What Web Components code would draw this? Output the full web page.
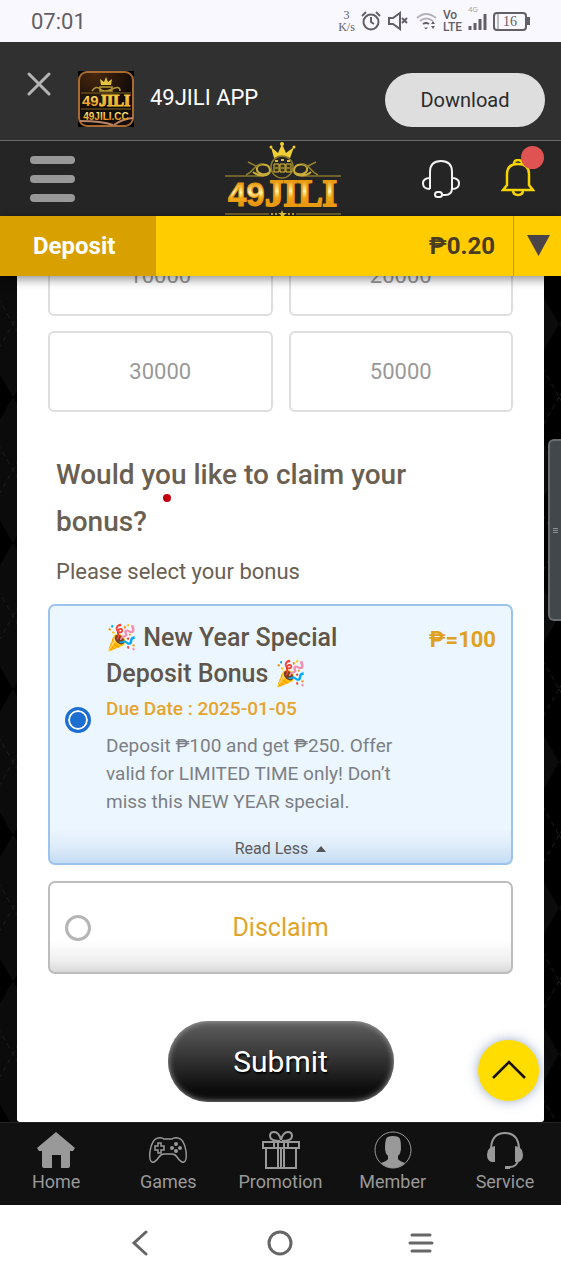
<!DOCTYPE html>
<html lang="en">
<head>
<meta charset="UTF-8">
<meta name="viewport" content="width=device-width, initial-scale=1">
<title>49JILI - Deposit</title>
<style>
  html, body {
    height: 100%;
  }
  body {
    margin: 0;
    background: #fff;
    font-family: Roboto, "Noto Sans", sans-serif;
  }
</style>
</head>
<body>
<c-app></c-app>

<script>
class StatusBar extends HTMLElement {
  constructor() {
    super();
    this.attachShadow({ mode: "open" });
    this.shadowRoot.innerHTML = `
      <style>
        :host {
          display: flex;
          align-items: center;
          justify-content: space-between;
          height: 42px;
          padding: 0 31px;
          box-sizing: border-box;
          background: #faf8ff;
          color: #626066;
        }
        .time {
          font-size: 22px;
          line-height: 26px;
          padding-top: 2px;
        }
        .icons {
          display: flex;
          align-items: center;
          gap: 6px;
        }
        .speed {
          display: flex;
          flex-direction: column;
          font: 12px/12px "Liberation Serif", serif;
          text-align: center;
        }
        .lte {
          display: flex;
          flex-direction: column;
          font-size: 12px;
          line-height: 12px;
          font-weight: 500;
        }
        .signal {
          display: flex;
          flex-direction: column;
          font-size: 8px;
          line-height: 8px;
          color: #aaa;
          padding-bottom: 6px;
        }
        .battery {
          display: flex;
          align-items: center;
        }
        .level {
          width: 34px;
          height: 19px;
          box-sizing: border-box;
          border: 2px solid #626066;
          border-radius: 4px;
          font: 14px/15px "Liberation Serif", serif;
          text-align: center;
          background: linear-gradient(to right, transparent 2px, #bbb 2px, #bbb 4px, transparent 4px);
        }
        .tip {
          width: 3px;
          height: 8px;
          background: #626066;
        }
        svg {
          display: block;
          fill: none;
          stroke: #626066;
          stroke-width: 2;
        }
      </style>
      <span class="time">07:01</span>
      <div class="icons">
        <div class="speed"><span>3</span><span>K/s</span></div>
        <svg width="20" height="20" viewBox="0 0 20 20">
          <circle cx="10" cy="11" r="7.5"/>
          <path d="M10 6v5l3 2M1 5l4-4M19 5l-4-4"/>
        </svg>
        <svg width="22" height="20" viewBox="0 0 22 20">
          <path d="M2 7h4l7-5v16l-7-5H2z"/>
          <path d="M15 7l5 5M20 7l-5 5"/>
        </svg>
        <svg width="22" height="18" viewBox="-1 0 22 18">
          <path d="M1 6q9-8 19 0M4 9q6-5 13 0" stroke="#b4b2b8"/>
          <path d="M7 12q3-2 6 0"/>
          <path d="M8 15.500l2 2 2-2z" fill="#626066" stroke="none"/>
          <path d="M15 12l2-3 2 3zM15 14l2 3 2-3z" fill="#626066" stroke="none"/>
        </svg>
        <div class="lte"><span>Vo</span><span>LTE</span></div>
        <div class="signal">
          <span>4G</span>
          <svg width="19" height="16" viewBox="0 0 19 16" style="stroke-width: 3px">
            <path d="M2 16v-4M7 16V9M12 16V5M17 16V0"/>
          </svg>
        </div>
        <div class="battery"><div class="level">16</div><div class="tip"></div></div>
      </div>
    `;
  }
}
customElements.define("c-status-bar", StatusBar);

class AppBanner extends HTMLElement {
  constructor() {
    super();
    this.attachShadow({ mode: "open" });
    this.shadowRoot.innerHTML = `
      <style>
        :host {
          display: flex;
          align-items: flex-start;
          height: 98px;
          box-sizing: border-box;
          padding: 29px 16px 0 27px;
          background: #303030;
          color: #fff;
        }
        button {
          border: none;
          padding: 0;
          font-family: inherit;
        }
        .close {
          width: 24px;
          height: 26px;
          margin-right: 27px;
          background: none;
        }
        .close svg {
          display: block;
          stroke: #b5b5b5;
          stroke-width: 3;
          stroke-linecap: round;
        }
        .name {
          flex: 1;
          padding-left: 16px;
          font-size: 22px;
          line-height: 53px;
        }
        .download {
          width: 160px;
          height: 54px;
          margin-top: 2px;
          border-radius: 27px;
          background: #dedede;
          color: #2b2b2b;
          font-size: 20px;
        }
      </style>
      <button class="close" aria-label="Close">
        <svg width="24" height="24" viewBox="0 0 24 24"><path d="M2 2l20 20M22 2L2 22"/></svg>
      </button>
      <svg width="56" height="56" viewBox="0 0 56 56">
        <defs>
          <linearGradient id="gold" x1="0" y1="0" x2="0" y2="1">
            <stop offset="0" stop-color="#fff3a0"/>
            <stop offset=".5" stop-color="#f3bd35"/>
            <stop offset="1" stop-color="#d57a12"/>
          </linearGradient>
          <radialGradient id="dust" cx=".3" cy="0" r=".7">
            <stop offset="0" stop-color="#4a280e"/>
            <stop offset="1" stop-color="#120c08"/>
          </radialGradient>
        </defs>
        <path fill="#000" d="M0 0h56v56H0z"/>
        <rect x="1" y="1" width="54" height="54" rx="8" fill="url(#dust)" stroke="#a86a30" stroke-width="2"/>
        <path d="M2 50q22 0 33 4M36 54q8-6 19-7" fill="none" stroke="#b88468" stroke-width="2"/>
        <path d="M3 22h50M3 38h50" stroke="#786024"/>
        <path d="M23 14l-1-6 4 3 2-5 2 5 4-3-1 6z" fill="#e2c53c"/>
        <path d="M14 20q4-6 8-2t12 0 8 2M22 16h12v4H22z" fill="none" stroke="#b39832" stroke-width="1.500"/>
        <text x="4" y="35" font-size="15" font-weight="bold" font-family="Liberation Sans, sans-serif" fill="url(#gold)">49</text>
        <text x="21" y="35" font-size="16" font-weight="bold" font-family="Liberation Serif, serif" fill="url(#gold)" stroke="#f3bd35">JILI</text>
        <text x="28" y="49" font-size="10" font-weight="bold" text-anchor="middle" font-family="Liberation Sans, sans-serif" fill="url(#gold)">49JILI.CC</text>
      </svg>
      <span class="name"><slot></slot></span>
      <button class="download">Download</button>
    `;
  }
}
customElements.define("c-app-banner", AppBanner);

class SiteHeader extends HTMLElement {
  constructor() {
    super();
    this.attachShadow({ mode: "open" });
    this.shadowRoot.innerHTML = `
      <style>
        :host {
          display: grid;
          grid-template-columns: 1fr auto 1fr;
          align-items: center;
          height: 76px;
          box-sizing: border-box;
          padding: 0 26px 0 30px;
          border-top: 1px solid #6a6a6a;
          background: #252525;
        }
        button {
          position: relative;
          display: block;
          padding: 0;
          border: none;
          background: none;
        }
        .menu {
          display: flex;
          flex-direction: column;
          gap: 11px;
          width: 45px;
        }
        .menu i {
          width: 45px;
          height: 8px;
          border-radius: 4px;
          background: #989898;
        }
        .actions {
          display: flex;
          align-items: center;
          justify-content: flex-end;
          gap: 40px;
        }
        svg {
          display: block;
        }
        .badge {
          position: absolute;
          top: -13px;
          right: -9px;
          width: 23px;
          height: 23px;
          border-radius: 50%;
          background: #df5353;
        }
      </style>
      <button class="menu" aria-label="Menu"><i></i><i></i><i></i></button>
      <a href="#" aria-label="49JILI">
        <svg width="118" height="74" viewBox="0 0 118 74">
          <defs>
            <linearGradient id="gold" x1="0" y1="0" x2="0" y2="1">
              <stop offset=".2" stop-color="#e89a10"/>
              <stop offset=".45" stop-color="#fff6b0"/>
              <stop offset=".6" stop-color="#f0a818"/>
              <stop offset="1" stop-color="#e07800"/>
            </linearGradient>
          </defs>
          <path d="M1 34h39M77 34h40M1 72h44M72 72h45" stroke="#6d6028" stroke-width="2"/>
          <path d="M50 16L47 5l7 6 4-9 4 9 8-6-4 11q-8-4-16 0z" fill="#f0cf35"/>
          <circle cx="58" cy="2" r="2" fill="#f0cf35"/>
          <circle cx="47" cy="5" r="1.500" fill="#f0cf35"/>
          <circle cx="70" cy="5" r="1.500" fill="#f0cf35"/>
          <circle cx="58" cy="25" r="11" fill="none" stroke="#8d7b2c" stroke-width="1.500"/>
          <path d="M51 19h3M57 18h3M63 19h3" stroke="#d8b93a" stroke-width="2"/>
          <path d="M50 22h5v8h-5zM56 22h5v8h-5zM62 22h5v8h-5zM51 26h3M57 26h3M63 26h3" fill="#3a3314" stroke="#d8bd40"/>
          <path d="M46 30c-6 5-14 1-13-4s12-5 13 2c0 7-11 7-17 2M70 30c6 5 14 1 13-4s-12-5-13 2c0 7 11 7 17 2" fill="none" stroke="#c9ad3a" stroke-width="2"/>
          <path d="M22 33c8-3 8-11 16-11M34 25l-10-5M94 33c-8-3-8-11-16-11M82 25l10-5" fill="none" stroke="#93812e" stroke-width="1.500"/>
          <text x="4" y="64" font-size="33" font-weight="bold" font-family="Liberation Sans, sans-serif" fill="url(#gold)" stroke="#e89a10">49</text>
          <text x="41" y="64" font-size="37" font-weight="bold" font-family="Liberation Serif, serif" fill="url(#gold)" stroke="#e89a10" stroke-width="2">JILI</text>
          <path d="M47 72h2M51 72h2M64 72h2M68 72h2" stroke="#c8a936" stroke-width="2"/>
          <path d="M58 68l1 3h4l-3 2 1 3h-5l1-3-3-2h3z" fill="#f0cf35"/>
        </svg>
      </a>
      <div class="actions">
        <button aria-label="Support">
          <svg width="40" height="40" viewBox="0 0 40 40" fill="none" stroke="#f2f2f2" stroke-width="2">
            <path d="M9 30V13q0-11 11-11t11 11v16q0 7-7 7h-3"/>
            <path d="M9 19q-7 0-7 5.500T9 30M31 19q7 0 7 5.500T31 30"/>
            <rect x="14" y="33" width="7" height="5" rx="2.500"/>
          </svg>
        </button>
        <button aria-label="Notifications">
          <svg width="34" height="40" viewBox="0 0 34 40" fill="none" stroke="#f5d400" stroke-width="2.500">
            <path d="M2 31l4-5V15Q6 5 17 5t11 10v11l4 5z"/>
            <path d="M13 5q0-4 4-4t4 4M12 31q0 5 5 5t5-5"/>
          </svg>
          <span class="badge"></span>
        </button>
      </div>
    `;
  }
}
customElements.define("c-site-header", SiteHeader);

class BalanceBar extends HTMLElement {
  constructor() {
    super();
    this.attachShadow({ mode: "open" });
    this.shadowRoot.innerHTML = `
      <style>
        :host {
          position: relative;
          z-index: 1;
          display: flex;
          height: 60px;
          background: #fc0;
          box-shadow: 0 3px 10px rgba(0, 0, 0, .45);
          font-size: 24px;
          line-height: 60px;
          font-weight: 700;
        }
        .title {
          width: 156px;
          box-sizing: border-box;
          padding-left: 33px;
          background: #d8a000;
          color: #fff;
        }
        .balance {
          flex: 1;
          padding-right: 18px;
          text-align: right;
          color: #4a3c20;
        }
        button {
          width: 48px;
          padding: 0 11px 2px 13px;
          border: none;
          border-left: 1px solid #c49c00;
          background: none;
        }
        svg {
          display: block;
        }
      </style>
      <div class="title"><slot name="title"></slot></div>
      <div class="balance"><slot></slot></div>
      <button aria-label="More">
        <svg width="23" height="21" viewBox="0 0 23 21"><path d="M0 0h23L11.500 21z" fill="#4a4448"/></svg>
      </button>
    `;
  }
}
customElements.define("c-balance-bar", BalanceBar);

class AmountButton extends HTMLElement {
  constructor() {
    super();
    this.attachShadow({ mode: "open" });
    this.shadowRoot.innerHTML = `
      <style>
        :host {
          display: block;
        }
        button {
          width: 100%;
          height: 81px;
          border: 2px solid #dedede;
          border-radius: 6px;
          background: #fff;
          color: #999;
          font-family: inherit;
          font-size: 22px;
        }
      </style>
      <button><slot></slot></button>
    `;
  }
}
customElements.define("c-amount-button", AmountButton);

class BonusOption extends HTMLElement {
  constructor() {
    super();
    this.attachShadow({ mode: "open" });
    this.shadowRoot.innerHTML = `
      <style>
        :host {
          display: block;
          border: 2px solid #bdbdbd;
          border-radius: 7px;
          background: linear-gradient(to top, #d9d9d9, #f0f0f0 12px, #fff 32px);
        }
        :host([selected]) {
          border-color: #9cc3ec;
          background: linear-gradient(to top, #c4dcf4, #ddebf9 16px, #ecf6ff 34px);
        }
        label {
          display: flex;
          align-items: center;
          gap: 15px;
          min-height: 89px;
          padding: 0 15px;
        }
        input {
          appearance: none;
          flex: none;
          width: 26px;
          height: 26px;
          margin: 0;
          border: 3px solid #b5b5b5;
          border-radius: 50%;
        }
        input:checked {
          border-color: #1c6fd0;
          background: #1c6fd0;
          box-shadow: inset 0 0 0 2px #fff;
        }
        .text {
          flex: 1;
        }
        ::slotted(button) {
          display: block;
          width: 100%;
          height: 29px;
          border: none;
          padding: 0;
          background: none;
          color: #5c5c5c;
          font-family: inherit;
          font-size: 16px;
        }
      </style>
      <label>
        <input type="radio" name="bonus">
        <div class="text"><slot></slot></div>
      </label>
      <slot name="more"></slot>
    `;
    this.shadowRoot.querySelector("input").checked = this.hasAttribute("selected");
  }
}
customElements.define("c-bonus-option", BonusOption);

class DepositPage extends HTMLElement {
  constructor() {
    super();
    this.attachShadow({ mode: "open" });
    this.shadowRoot.innerHTML = `
      <style>
        :host {
          position: relative;
          flex: 1;
          min-height: 0;
          display: flex;
          flex-direction: column;
          justify-content: flex-end;
          overflow: hidden;
          padding: 0 17px;
          background: #000;
        }
        .argyle {
          position: absolute;
          inset: 0;
          width: 100%;
          height: 100%;
        }
        .panel {
          position: relative;
          padding: 0 31px 20px;
          background: #fff;
          border-radius: 0 0 3px 3px;
        }
        .amounts {
          display: grid;
          grid-template-columns: 1fr 1fr;
          gap: 15px 16px;
          margin-bottom: 39px;
        }
        .question {
          position: relative;
          padding: 0 64px 0 8px;
          color: #6a6052;
        }
        h2 {
          margin: 0;
          font-size: 28px;
          line-height: 47px;
          font-weight: 500;
        }
        .dot {
          position: absolute;
          left: 115px;
          top: 43px;
          width: 8px;
          height: 8px;
          border-radius: 50%;
          background: #c40010;
        }
        .question p {
          margin: 11px 0 16px;
          font-size: 22px;
          line-height: 32px;
        }
        .options {
          display: grid;
          gap: 16px;
        }
        .bonus {
          display: flex;
          justify-content: space-between;
          padding: 14px 0 18px;
        }
        .info {
          flex: 1;
          padding-right: 24px;
        }
        h3 {
          margin: 0;
          color: #5f564b;
          font-size: 25px;
          line-height: 36px;
          font-weight: 500;
        }
        .due {
          color: #e5a52c;
          font-size: 19px;
          line-height: 34px;
          font-weight: 500;
        }
        .desc {
          margin: 6px 0 0;
          color: #7c7f84;
          font-size: 19px;
          line-height: 28px;
        }
        .price {
          color: #e0a020;
          font-size: 22px;
          line-height: 40px;
          font-weight: 700;
        }
        .disclaim {
          padding-right: 41px;
          color: #dfa52a;
          font-size: 25px;
          text-align: center;
        }
        .submit {
          display: block;
          width: 226px;
          height: 81px;
          margin: 47px auto 0;
          border: none;
          border-radius: 41px;
          background: linear-gradient(#606060, #303030 50%, #0c0c0c 85%);
          box-shadow: inset 0 0 6px #aaa;
          color: #fff;
          font-family: inherit;
          font-size: 30px;
          text-shadow: 1px 2px 2px #000;
        }
        .thumb {
          position: absolute;
          top: 163px;
          right: 0;
          width: 13px;
          height: 182px;
          box-sizing: border-box;
          border: 2px solid #6a6d70;
          border-right: none;
          border-radius: 6px 0 0 6px;
          background: #42474c;
          display: grid;
          place-items: center;
        }
        .thumb i {
          width: 5px;
          height: 1px;
          background: #8b9094;
          box-shadow: 0 2px #8b9094, 0 -2px #8b9094;
        }
        .top {
          position: absolute;
          right: 22px;
          bottom: 21px;
          width: 61px;
          height: 61px;
          padding: 0;
          border: none;
          border-radius: 50%;
          background: #fd0;
          box-shadow: 0 0 12px rgba(60, 90, 140, .5);
          display: grid;
          place-items: center;
        }
      </style>
      <svg class="argyle">
        <defs>
          <pattern id="argyle" width="84" height="146" patternUnits="userSpaceOnUse" x="-29" y="-25">
            <path d="M42 0l42 73-42 73L0 73z" fill="#0b0b0b"/>
            <path d="M0 0l84 146M84 0L0 146" stroke="#1c1c1c" stroke-dasharray="5 4"/>
          </pattern>
        </defs>
        <rect width="100%" height="100%" fill="url(#argyle)"/>
      </svg>
      <div class="panel">
        <div class="amounts">
          <c-amount-button>10000</c-amount-button>
          <c-amount-button>20000</c-amount-button>
          <c-amount-button>30000</c-amount-button>
          <c-amount-button>50000</c-amount-button>
        </div>
        <div class="question">
          <h2>Would you like to claim your bonus?</h2>
          <span class="dot"></span>
          <p>Please select your bonus</p>
        </div>
        <div class="options">
          <c-bonus-option selected>
            <div class="bonus">
              <div class="info">
                <h3>🎉 New Year Special<br>Deposit Bonus 🎉</h3>
                <div class="due">Due Date : 2025-01-05</div>
                <p class="desc">Deposit ₱100 and get ₱250. Offer valid for LIMITED TIME only! Don’t miss this NEW YEAR special.</p>
              </div>
              <div class="price">₱=100</div>
            </div>
            <button slot="more">Read Less &nbsp;<svg width="10" height="9" viewBox="0 0 10 9"><path d="M0 7l5-6 5 6z" fill="#555"/></svg></button>
          </c-bonus-option>
          <c-bonus-option>
            <div class="disclaim">Disclaim</div>
          </c-bonus-option>
        </div>
        <button class="submit">Submit</button>
      </div>
      <div class="thumb"><i></i></div>
      <button class="top" aria-label="Back to top">
        <svg width="34" height="22" viewBox="0 0 34 22"><path d="M1 18L17 2l16 16" fill="none" stroke="#1a1200" stroke-width="2.500"/></svg>
      </button>
    `;
  }
}
customElements.define("c-deposit-page", DepositPage);

class TabItem extends HTMLElement {
  constructor() {
    super();
    this.attachShadow({ mode: "open" });
    this.shadowRoot.innerHTML = `
      <style>
        :host {
          flex: 1;
          display: block;
        }
        a {
          display: flex;
          flex-direction: column;
          align-items: center;
          gap: 1px;
          color: #999;
          font-size: 18px;
          line-height: 24px;
          text-decoration: none;
        }
        ::slotted(svg) {
          width: 38px;
          height: 38px;
          fill: none;
          stroke: #999;
          stroke-width: 2;
        }
      </style>
      <a href="#"><slot name="icon"></slot><slot></slot></a>
    `;
  }
}
customElements.define("c-tab-item", TabItem);

class TabBar extends HTMLElement {
  constructor() {
    super();
    this.attachShadow({ mode: "open" });
    this.shadowRoot.innerHTML = `
      <style>
        :host {
          display: flex;
          height: 83px;
          box-sizing: border-box;
          padding-top: 8px;
          border-top: 1px solid #222;
          background: #111;
        }
      </style>
      <c-tab-item>
        <svg slot="icon" viewBox="0 0 38 38">
          <path d="M19 1l19 16-2 3h-3v15q0 2-2 2h-7V24h-9v13H7q-2 0-2-2V20H2l-2-3z" fill="#999" stroke="none"/>
        </svg>Home
      </c-tab-item>
      <c-tab-item>
        <svg slot="icon" viewBox="0 0 38 38" style="stroke-width: 1.500px">
          <path d="M9 7q4-1 6 1h8q2-2 6-1 6 1 8 13 1 10-2 11-3 1-7-5-2-3-5-3h-8q-3 0-5 3-4 6-7 5-3-1-2-11 2-12 8-13z"/>
          <path d="M9 12h3v3h3v4h-3v3H9v-3H6v-4h3z"/>
          <g fill="#999" stroke="none"><circle cx="27" cy="13" r="2"/><circle cx="27" cy="20" r="2"/><circle cx="23" cy="17" r="2"/><circle cx="31" cy="17" r="2"/></g>
        </svg>Games
      </c-tab-item>
      <c-tab-item>
        <svg slot="icon" viewBox="0 0 38 38">
          <path d="M1 11h36v6H1zM4 17h30v20H4zM12 11v6M26 11v6M16 11v26M22 11v26M19 17v20"/>
          <path d="M18 10q-10 0-10-5 0-4 4-4 5 0 7 8 2-8 7-8 4 0 4 4 0 5-10 5"/>
        </svg>Promotion
      </c-tab-item>
      <c-tab-item>
        <svg slot="icon" viewBox="0 0 38 38">
          <circle cx="19" cy="19" r="18" stroke-width="1"/>
          <path d="M12 8q1-3 7-3t7 3q1 3 1 9 0 5-3 8v3q1 2 7 4-5 5-12 5T7 32q6-2 7-4v-3q-3-3-3-8 0-6 1-9z" fill="#999" stroke="none"/>
        </svg>Member
      </c-tab-item>
      <c-tab-item>
        <svg slot="icon" viewBox="0 0 38 38">
          <path d="M5 17Q6 2 19 2t14 15"/>
          <path d="M9 15v16q-8 1-8-7t8-9zM29 15v16q8 1 8-7t-8-9z" fill="#999" stroke="none"/>
          <path d="M32 30q-2 6-8 6h-4"/>
          <path d="M19 35h5v3h-5z" fill="#999" stroke="none"/>
        </svg>Service
      </c-tab-item>
    `;
  }
}
customElements.define("c-tab-bar", TabBar);

class SystemNav extends HTMLElement {
  constructor() {
    super();
    this.attachShadow({ mode: "open" });
    this.shadowRoot.innerHTML = `
      <style>
        :host {
          display: flex;
          height: 75px;
          padding: 0 70px;
          background: #fff;
        }
        button {
          flex: 1;
          display: grid;
          place-items: center;
          padding: 0;
          border: none;
          background: none;
        }
        svg {
          fill: none;
          stroke: #666;
          stroke-width: 3;
          stroke-linecap: round;
        }
      </style>
      <button aria-label="Back"><svg width="26" height="26" viewBox="0 0 26 26"><path d="M19 2L7 13l12 11"/></svg></button>
      <button aria-label="Home"><svg width="26" height="26" viewBox="0 0 26 26"><circle cx="13" cy="13" r="11"/></svg></button>
      <button aria-label="Recent apps"><svg width="26" height="26" viewBox="0 0 26 26"><path d="M4 5h18M2 13h22M4 21h18"/></svg></button>
    `;
  }
}
customElements.define("c-system-nav", SystemNav);

class App extends HTMLElement {
  constructor() {
    super();
    this.attachShadow({ mode: "open" });
    this.shadowRoot.innerHTML = `
      <style>
        :host {
          display: flex;
          flex-direction: column;
          height: 100vh;
        }
      </style>
      <c-status-bar></c-status-bar>
      <c-app-banner>49JILI APP</c-app-banner>
      <c-site-header></c-site-header>
      <c-balance-bar><span slot="title">Deposit</span>₱0.20</c-balance-bar>
      <c-deposit-page></c-deposit-page>
      <c-tab-bar></c-tab-bar>
      <c-system-nav></c-system-nav>
    `;
  }
}
customElements.define("c-app", App);
</script>
</body>
</html>
